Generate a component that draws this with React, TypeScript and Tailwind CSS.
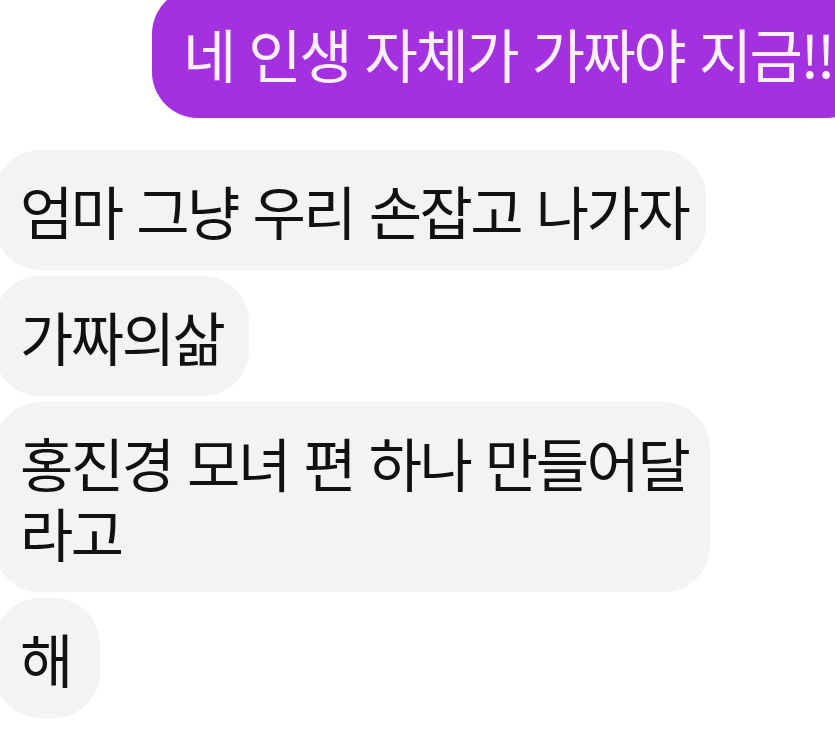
import React from "react";

const font = { fontFamily: '"Noto Sans CJK KR", "Noto Sans", sans-serif' };

function Incoming({ text, pr = "pr-[18px]", minW = "" }: { text: string; pr?: string; minW?: string }) {
  return (
    <div
      className={`-ml-[6px] w-fit max-w-[716px] ${minW} rounded-[46px] bg-[#f3f3f5] pl-[26px] ${pr} py-[25px] text-[58px] leading-[70px] tracking-[-2.5px] [word-spacing:4px] text-[#111111]`}
    >
      {text}
    </div>
  );
}

export default function App() {
  return (
    <div className="h-[740px] w-[835px] overflow-hidden bg-white" style={font}>
      <div className="flex flex-col">
        <div className="flex pl-[152px]">
          <div className="-mt-[12px] shrink-0 whitespace-nowrap rounded-[46px] bg-[#a431e0] pl-[31px] pr-[40px] pt-[30px] pb-[30px] text-[58px] leading-[70px] tracking-[-2.5px] [word-spacing:4px] text-[#fdf0fd]">
            네 인생 자체가 가짜야 지금!!
          </div>
        </div>
        <div className="mt-[32px] flex flex-col gap-[6px]">
          <Incoming text="엄마 그냥 우리 손잡고 나가자" />
          <Incoming text="가짜의삶" pr="pr-[26px]" />
          <Incoming text="홍진경 모녀 편 하나 만들어달라고" />
          <Incoming text="해" minW="min-w-[106px]" />
        </div>
      </div>
    </div>
  );
}
